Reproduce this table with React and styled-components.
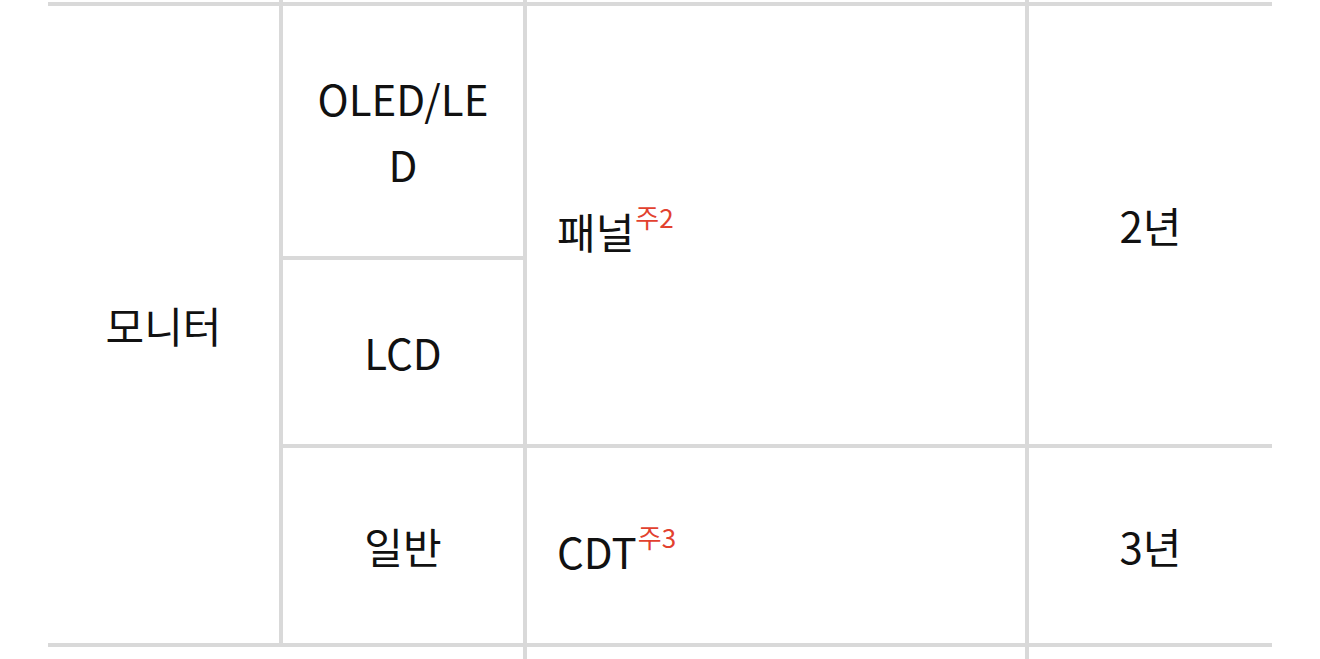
import { createGlobalStyle } from 'styled-components';
import styled from 'styled-components';

const GlobalStyle = createGlobalStyle`
	html, body {
		margin: 0;
		padding: 0;
		background: #fff;
		overflow: hidden;
	}
	body {
		font-family: 'Noto Sans CJK KR', 'Noto Sans', sans-serif;
		color: #111;
	}
`;

const Page = styled.div`
	height: 659px;
	overflow: hidden;
	padding: 0 48px;
`;

// 표 = 회색 배경 + 4px gap 으로 테두리 표현
const Table = styled.div`
	display: grid;
	width: 1224px;
	grid-template-columns: 231px 240px 498px 243px;
	grid-template-rows: 2px auto auto auto 60px;
	gap: 4px;
	background: #d9d9d9;
`;

const Cell = styled.div`
	background: #fff;
	font-size: 42px;
	line-height: 66px;
	padding: ${(props) => (props.empty ? '0' : '59px 30px')};
	text-align: ${(props) => props.align || 'center'};
	word-break: break-all;
	display: flex;
	flex-direction: column;
	justify-content: center;
	grid-row: ${(props) => props.row};
	grid-column: ${(props) => props.col};
`;

// 주석 번호 (위첨자) - 줄 높이를 살짝 키움
const Note = styled.sup`
	color: #e2412f;
	font-size: 26px;
	line-height: 60px;
	vertical-align: 21px;
	margin-left: 1px;
`;

function App() {
	return (
		<>
			<GlobalStyle />
			<Page>
				<Table>
					{/* 위쪽 행 (스크롤로 잘린 부분) */}
					<Cell empty row='1' col='1' />
					<Cell empty row='1' col='2' />
					<Cell empty row='1' col='3' />
					<Cell empty row='1' col='4' />

					<Cell row='2 / span 3' col='1'>모니터</Cell>
					<Cell row='2' col='2'>OLED/LED</Cell>
					<Cell row='2 / span 2' col='3' align='left'>
						<span>
							패널<Note>주2</Note>
						</span>
					</Cell>
					<Cell row='2 / span 2' col='4'>2년</Cell>
					<Cell row='3' col='2'>LCD</Cell>

					<Cell row='4' col='2'>일반</Cell>
					<Cell row='4' col='3' align='left'>
						<span>
							CDT<Note>주3</Note>
						</span>
					</Cell>
					<Cell row='4' col='4'>3년</Cell>

					{/* 아래쪽 행 */}
					<Cell empty row='5' col='1 / span 2' />
					<Cell empty row='5' col='3' />
					<Cell empty row='5' col='4' />
				</Table>
			</Page>
		</>
	);
}

export default App;
